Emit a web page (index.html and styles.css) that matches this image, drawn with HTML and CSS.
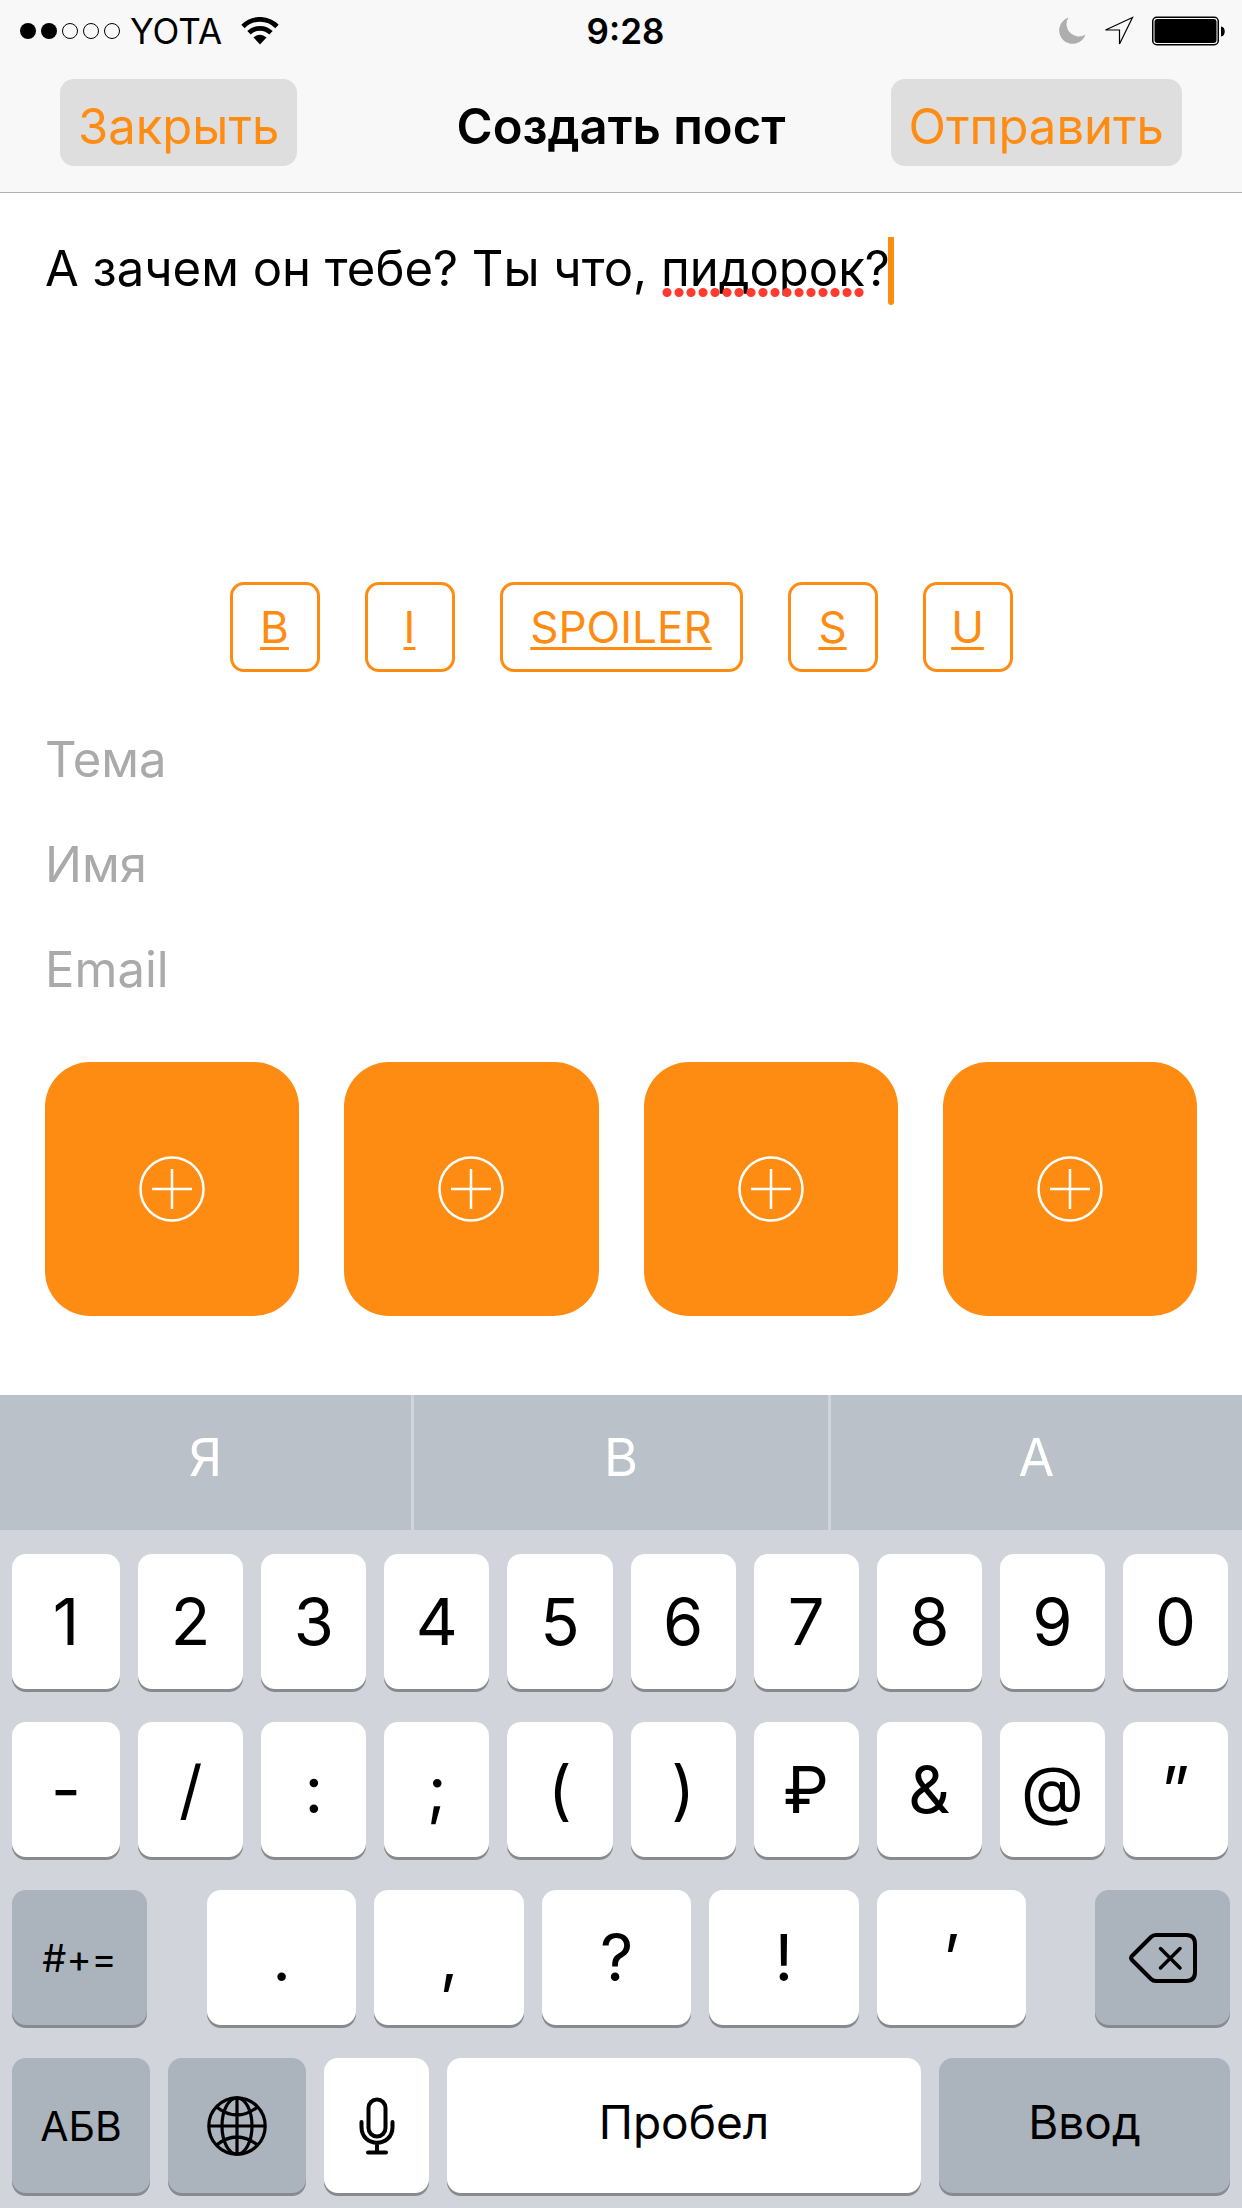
FILE: index.html
```
<!DOCTYPE html>
<html lang="ru">
<head>
    <meta charset="UTF-8">
    <meta name="viewport" content="width=device-width, initial-scale=1.0">
    <title>Создать пост</title>
    <link rel="stylesheet" href="styles.css">
</head>
<body>
    <header class="header">
        <div class="status-bar">
            <div class="status-left">
                <svg class="signal" width="102" height="18" viewBox="0 0 102 18">
                    <circle cx="9" cy="9" r="8"/>
                    <circle cx="30" cy="9" r="8"/>
                    <circle cx="51" cy="9" r="7.5" class="signal-empty"/>
                    <circle cx="72" cy="9" r="7.5" class="signal-empty"/>
                    <circle cx="93" cy="9" r="7.5" class="signal-empty"/>
                </svg>
                <span class="carrier">YOTA</span>
                <svg class="wifi" width="38" height="28" viewBox="0 0 38 28">
                    <path d="M2 9.500C11.500 0 26.500 0 36 9.500M8 15.800C14 9.800 24 9.800 30 15.800" fill="none" stroke="#000" stroke-width="4.800"/>
                    <path d="M12.500 20.500Q19 15 25.500 20.500L19 27.500Z"/>
                </svg>
            </div>
            <span class="time">9:28</span>
            <div class="status-right">
                <svg width="28" height="28" viewBox="0 0 28 28">
                    <path d="M10.500 .5A13.500 13.500 0 1 0 27.500 17.500A12.300 12.300 0 0 1 10.500 .5Z" fill="#aeaeae"/>
                </svg>
                <svg class="location" width="30" height="30" viewBox="0 0 30 30">
                    <path d="M28.500 1.500L1.500 14H15.500V28Z" fill="none" stroke="#000" stroke-width="1.200"/>
                </svg>
                <svg width="74" height="30" viewBox="0 0 74 30">
                    <rect x=".75" y="1.250" width="65.500" height="27.500" rx="4" fill="none" stroke="#000" stroke-width="1.500"/>
                    <rect x="2.500" y="3" width="62" height="24" rx="3"/>
                    <path d="M69 10.500c5 0 5 10 0 10z"/>
                </svg>
            </div>
        </div>
        <div class="nav-bar">
            <button type="button" class="nav-button">Закрыть</button>
            <h1>Создать пост</h1>
            <button type="button" class="nav-button">Отправить</button>
        </div>
    </header>

    <main class="form">
        <div class="editor">
            <textarea class="message" aria-label="Текст поста" spellcheck="false">А зачем он тебе? Ты что, пидорок?</textarea>
            <span class="misspelled"></span>
            <span class="caret"></span>
        </div>

        <div class="markup">
            <button type="button">B</button>
            <button type="button">I</button>
            <button type="button" class="wide">SPOILER</button>
            <button type="button">S</button>
            <button type="button">U</button>
        </div>

        <div class="fields">
            <input type="text" placeholder="Тема" aria-label="Тема">
            <input type="text" placeholder="Имя" aria-label="Имя">
            <input type="email" placeholder="Email" aria-label="Email">
        </div>

        <div class="attachments">
            <button type="button" aria-label="Добавить файл 1"><svg width="66" height="66" viewBox="0 0 66 66"><path d="M33 13v40M13 33h40"/><circle cx="33" cy="33" r="31.500"/></svg></button>
            <button type="button" aria-label="Добавить файл 2"><svg width="66" height="66" viewBox="0 0 66 66"><path d="M33 13v40M13 33h40"/><circle cx="33" cy="33" r="31.500"/></svg></button>
            <button type="button" aria-label="Добавить файл 3"><svg width="66" height="66" viewBox="0 0 66 66"><path d="M33 13v40M13 33h40"/><circle cx="33" cy="33" r="31.500"/></svg></button>
            <button type="button" aria-label="Добавить файл 4"><svg width="66" height="66" viewBox="0 0 66 66"><path d="M33 13v40M13 33h40"/><circle cx="33" cy="33" r="31.500"/></svg></button>
        </div>
    </main>

    <section class="keyboard">
        <div class="suggestions">
            <button type="button">Я</button>
            <button type="button">В</button>
            <button type="button">А</button>
        </div>
        <div class="keys">
            <div class="row row-ten">
                <button type="button" class="key">1</button>
                <button type="button" class="key">2</button>
                <button type="button" class="key">3</button>
                <button type="button" class="key">4</button>
                <button type="button" class="key">5</button>
                <button type="button" class="key">6</button>
                <button type="button" class="key">7</button>
                <button type="button" class="key">8</button>
                <button type="button" class="key">9</button>
                <button type="button" class="key">0</button>
            </div>
            <div class="row row-ten">
                <button type="button" class="key">-</button>
                <button type="button" class="key">/</button>
                <button type="button" class="key">:</button>
                <button type="button" class="key">;</button>
                <button type="button" class="key">(</button>
                <button type="button" class="key">)</button>
                <button type="button" class="key">₽</button>
                <button type="button" class="key">&amp;</button>
                <button type="button" class="key">@</button>
                <button type="button" class="key">”</button>
            </div>
            <div class="row row-punctuation">
                <button type="button" class="key dark symbols">#+=</button>
                <div class="punctuation">
                    <button type="button" class="key">.</button>
                    <button type="button" class="key">,</button>
                    <button type="button" class="key">?</button>
                    <button type="button" class="key">!</button>
                    <button type="button" class="key">’</button>
                </div>
                <button type="button" class="key dark" aria-label="Удалить">
                    <svg width="70" height="52" viewBox="0 0 70 52" fill="none" stroke="#000" stroke-width="4" stroke-linecap="round" stroke-linejoin="round">
                        <path d="M28 3H58Q67 3 67 12V40Q67 49 58 49H28Q25 49 23 47L4 28Q2 26 4 24L23 5Q25 3 28 3Z"/>
                        <path d="M32.500 16.500L52 36M52 16.500L32.500 36" stroke-width="3.500"/>
                    </svg>
                </button>
            </div>
            <div class="row row-bottom">
                <button type="button" class="key dark letters">АБВ</button>
                <button type="button" class="key dark" aria-label="Язык">
                    <svg width="60" height="60" viewBox="0 0 60 60" fill="none" stroke="#000" stroke-width="3.200">
                        <circle cx="30" cy="30" r="28.200"/>
                        <ellipse cx="30" cy="30" rx="15" ry="28.200"/>
                        <path d="M30 1.500V58.500M1.500 30H58.500M9.500 11Q30 27 50.500 11M9.500 49Q30 33 50.500 49"/>
                    </svg>
                </button>
                <button type="button" class="key" aria-label="Диктовка">
                    <svg width="36" height="58" viewBox="0 0 36 58" fill="none" stroke="#000" stroke-width="4" stroke-linecap="round">
                        <rect x="9.500" y="2.500" width="17" height="37" rx="8.500"/>
                        <path d="M2.500 25V30C2.500 51 33.500 51 33.500 30V25M18 46V55M9 55.500H27"/>
                    </svg>
                </button>
                <button type="button" class="key word">Пробел</button>
                <button type="button" class="key dark word">Ввод</button>
            </div>
        </div>
    </section>
</body>
</html>
```
FILE: styles.css
```
* {
    box-sizing: border-box;
}
body {
    margin: 0;
    min-height: 100vh;
    display: flex;
    flex-direction: column;
    background: #ffffff;
    color: #000000;
    font-family: Inter, "Liberation Sans", sans-serif;
}
button, input, textarea {
    margin: 0;
    padding: 0;
    border: none;
    outline: none;
    background: none;
    color: inherit;
    font-family: inherit;
}
button {
    cursor: pointer;
}
svg {
    display: block;
}

/* header */
.header {
    background: #f8f8f8;
    border-bottom: 1px solid #b2b2b2;
}
.status-bar {
    display: grid;
    grid-template-columns: 1fr auto 1fr;
    align-items: center;
    height: 62px;
    padding: 0 16px 0 19px;
    font-size: 35px;
    line-height: 62px;
}
.status-left, .status-right {
    display: flex;
    align-items: center;
}
.status-right {
    justify-content: flex-end;
    gap: 18px;
}
.signal-empty {
    fill: none;
    stroke: #000000;
}
.carrier {
    margin: 0 19px 0 9px;
}
.time {
    padding-left: 6px;
    font-weight: 600;
}
.nav-bar {
    display: grid;
    grid-template-columns: 1fr auto 1fr;
    align-items: center;
    padding: 17px 60px 26px;
}
.nav-button {
    justify-self: start;
    height: 87px;
    padding: 8px 18px 0;
    border-radius: 14px;
    background: #dedede;
    color: #ff8c12;
    font-size: 49px;
}
.nav-button:last-child {
    justify-self: end;
}
h1 {
    margin: 0;
    padding-top: 8px;
    font-size: 49px;
    font-weight: 600;
    line-height: 79px;
}

/* post form */
.form {
    flex: 1;
    display: flex;
    flex-direction: column;
    padding: 44px 45px 75px;
}
.editor {
    position: relative;
    height: 345px;
}
.message {
    display: block;
    width: 100%;
    height: 100%;
    resize: none;
    font-size: 49px;
    line-height: 64px;
}
.misspelled {
    position: absolute;
    top: 51px;
    left: 616px;
    width: 204px;
    height: 9px;
    background: radial-gradient(circle, #ff3b30 4px, transparent 5px) 0 0 / 12px 9px;
}
.caret {
    position: absolute;
    top: 0;
    left: 843px;
    width: 6px;
    height: 68px;
    border-radius: 0 0 3px 3px;
    background: #ff8c12;
}
.markup {
    display: flex;
    justify-content: center;
    gap: 45px;
}
.markup button {
    width: 90px;
    height: 90px;
    border: 3px solid #ff8c12;
    border-radius: 14px;
    color: #ff8c12;
    font-size: 44px;
    text-decoration: underline;
    text-decoration-thickness: 3px;
    text-underline-offset: 4px;
    text-decoration-skip-ink: none;
}
.markup .wide {
    width: 243px;
}
.fields {
    display: flex;
    flex-direction: column;
    padding: 35px 0 40px;
}
.fields input {
    width: 100%;
    height: 105px;
    font-size: 49px;
}
.fields input::placeholder {
    color: #aaaaaa;
    opacity: 1;
}
.attachments {
    display: grid;
    grid-template-columns: repeat(4, 1fr);
    gap: 45px;
}
.attachments button {
    display: flex;
    align-items: center;
    justify-content: center;
    aspect-ratio: 1;
    border-radius: 45px;
    background: #ff8c12;
}
.attachments svg {
    fill: none;
    stroke: #ffffff;
    stroke-width: 2.5;
}

/* keyboard */
.keyboard {
    background: #d1d4db;
}
.suggestions {
    display: grid;
    grid-template-columns: 411fr 414fr 411fr;
    gap: 3px;
}
.suggestions button {
    height: 135px;
    padding-bottom: 10px;
    background: #bac1c9;
    color: #ffffff;
    font-size: 52px;
}
.keys {
    display: flex;
    flex-direction: column;
    gap: 33px;
    padding: 24px 12px 15px;
}
.row {
    display: grid;
    gap: 18px;
}
.row-ten {
    grid-template-columns: 108fr repeat(9, 105fr);
    padding-right: 2px;
}
.row-punctuation {
    grid-template-columns: 135px 1fr 135px;
    gap: 0;
}
.row-bottom {
    grid-template-columns: 138px 138px 105px 1fr 291px;
}
.punctuation {
    display: grid;
    grid-template-columns: repeat(5, 1fr);
    gap: 18px;
    padding: 0 69px 0 60px;
}
.key {
    display: flex;
    align-items: center;
    justify-content: center;
    height: 135px;
    border-radius: 14px;
    background: #ffffff;
    box-shadow: 0 3px 0 #888a8d;
    font-size: 65px;
}
.dark {
    background: #abb3bd;
}
.symbols {
    font-size: 38px;
}
.letters {
    font-size: 41px;
}
.word {
    padding-bottom: 8px;
    font-size: 46px;
}
```
